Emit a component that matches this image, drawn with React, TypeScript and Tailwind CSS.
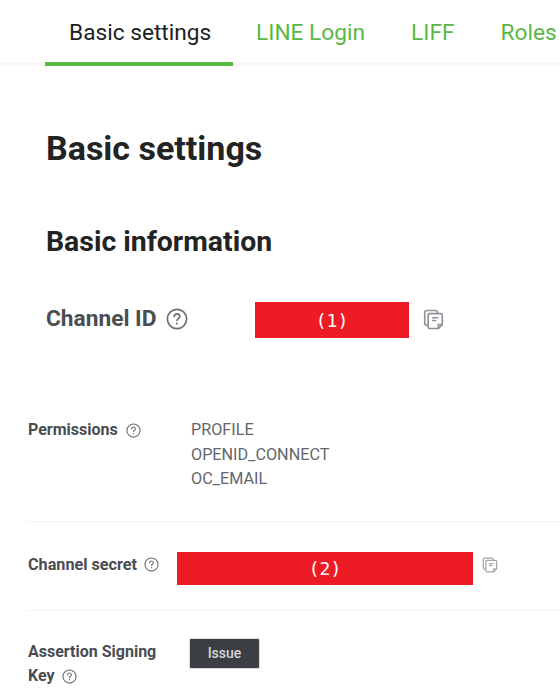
import type { ReactNode } from 'react'

function HelpIcon({ size }: { size: number }) {
  return (
    <svg width={size} height={size} viewBox="0 0 24 24" fill="none" stroke="#6b6f75" strokeWidth="1.8" className="shrink-0">
      <circle cx="12" cy="12" r="10.5" />
      <path d="M9 9.4a3 3 0 0 1 6 .1c0 2-3 2.2-3 4.2" strokeLinecap="round" />
      <circle cx="12" cy="17" r="1.1" fill="#6b6f75" stroke="none" />
    </svg>
  )
}

function CopyIcon({ size, color }: { size: number; color: string }) {
  return (
    <svg width={size} height={size} viewBox="0 0 22 22" fill="none" stroke={color} strokeWidth="1.7" strokeLinejoin="round" className="shrink-0">
      <path d="M5 17H3.8A2 2 0 0 1 1.8 15V3.6a2 2 0 0 1 2-2h9.4a2 2 0 0 1 2 2V4.5" />
      <path d="M7 4.8h11.6a1.6 1.6 0 0 1 1.6 1.6v10l-4 4H7a1.6 1.6 0 0 1-1.6-1.6v-12.4A1.6 1.6 0 0 1 7 4.8z" fill="#fff" />
      <path d="M16 20.3v-4h4.2" />
      <path d="M9.5 9.2h6.5M9.5 12h4.5" />
    </svg>
  )
}

function Redacted({ className, children }: { className: string; children: ReactNode }) {
  return (
    <div className={`flex items-center justify-center bg-[#ed1c24] text-white font-['DejaVu_Sans_Mono',monospace] ${className}`}>
      {children}
    </div>
  )
}

export default function App() {
  return (
    <div className="h-[688px] w-[560px] overflow-hidden bg-white font-['Roboto',sans-serif]">
      <nav className="flex h-[66px] items-start border-b-[3px] border-[#f7f7f7] pl-[45px] text-[22.7px] leading-[26px] whitespace-nowrap">
        <a className="-mb-[3px] box-border h-[66px] w-[188px] border-b-4 border-[#5ab946] pl-[24px] pt-[20px] text-[#1e1e1e]">Basic settings</a>
        <a className="ml-[23px] pt-[20px] text-[#5ab946]">LINE Login</a>
        <a className="ml-[46px] pt-[20px] text-[#5ab946]">LIFF</a>
        <a className="ml-[46px] pt-[20px] text-[#5ab946]">Roles</a>
      </nav>

      <h1 className="ml-[46px] mt-[62px] text-[34px] leading-[40px] font-bold text-[#232323]">Basic settings</h1>
      <h2 className="ml-[46px] mt-[58px] text-[28.4px] leading-[32px] font-bold text-[#232323]">Basic information</h2>

      <div className="ml-[46px] mt-[44px] flex h-[36px] items-center">
        <div className="-mt-[2px] flex w-[209px] items-center gap-[10px] text-[22.7px] font-bold text-[#494d52]">
          Channel ID
          <HelpIcon size={22} />
        </div>
        <Redacted className="h-[36px] w-[154px] text-[18px]">(1)</Redacted>
        <div className="-mt-[2px] ml-[14px]">
          <CopyIcon size={21} color="#8b8f96" />
        </div>
      </div>

      <div className="ml-[28px] mt-[80px] border-b border-[#f2f2f2] pb-[29px]">
        <div className="flex items-start">
          <div className="flex w-[163px] items-center gap-[8px] text-[16px] leading-[24px] font-bold text-[#494d52]">
            Permissions
            <HelpIcon size={15} />
          </div>
          <div className="text-[16.2px] leading-[24.5px] text-[#63676c]">
            <div>PROFILE</div>
            <div>OPENID_CONNECT</div>
            <div>OC_EMAIL</div>
          </div>
        </div>
      </div>

      <div className="ml-[28px] border-b border-[#f2f2f2] pt-[30px] pb-[25px]">
        <div className="flex h-[33px] items-center">
          <div className="flex w-[149px] items-center gap-[7px] pb-[7px] text-[16.2px] leading-[24px] font-bold text-[#494d52]">
            Channel secret
            <HelpIcon size={15} />
          </div>
          <Redacted className="h-[33px] w-[296px] text-[18px]">(2)</Redacted>
          <div className="ml-[9px] pb-[7px]">
            <CopyIcon size={16} color="#a0a3a9" />
          </div>
        </div>
      </div>

      <div className="ml-[28px] flex items-start pt-[27px]">
        <div className="w-[161px] text-[16px] leading-[24.5px] font-bold text-[#494d52]">
          <div className="mt-[2px]">Assertion Signing</div>
          <div className="flex items-center gap-[7px]">
            Key
            <HelpIcon size={15} />
          </div>
        </div>
        <button className="h-[31px] w-[71px] rounded-[2px] border border-[#dcdcdc] bg-[#3b3e43] text-[14px] font-medium text-[#d5d6d8]">Issue</button>
      </div>
    </div>
  )
}
